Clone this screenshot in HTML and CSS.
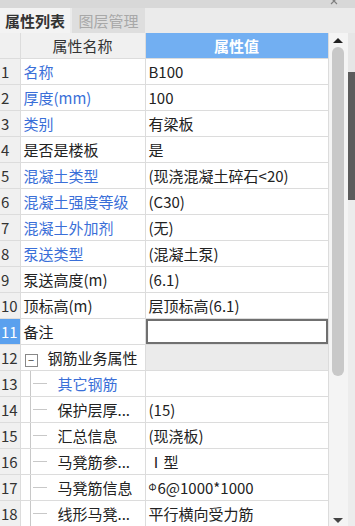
FILE: index.html
```html
<!DOCTYPE html>
<html lang="zh-CN">
<head>
<meta charset="UTF-8">
<title>属性列表</title>
<link rel="stylesheet" href="styles.css">
</head>
<body>
    <div class="topbar">
        <svg class="close" width="8" height="8" viewBox="0 0 8 8"><path d="M1 -2 L7 4 M7 -2 L1 4" stroke="#808080" stroke-width="1.2" fill="none"/></svg>
    </div>

    <!-- タブ -->
    <div class="tabs">
        <div class="tab active">属性列表</div>
        <div class="tab">图层管理</div>
    </div>

    <div class="main">
        <table class="grid">
            <colgroup><col class="c-num"><col class="c-name"><col class="c-val"></colgroup>
            <tr class="head"><th></th><th>属性名称</th><th class="val-head">属性值</th></tr>
            <tr><td class="num">1</td><td class="blue">名称</td><td>B100</td></tr>
            <tr><td class="num">2</td><td class="blue">厚度(mm)</td><td>100</td></tr>
            <tr><td class="num">3</td><td class="blue">类别</td><td>有梁板</td></tr>
            <tr><td class="num">4</td><td>是否是楼板</td><td>是</td></tr>
            <tr><td class="num">5</td><td class="blue">混凝土类型</td><td>(现浇混凝土碎石&lt;20)</td></tr>
            <tr><td class="num">6</td><td class="blue">混凝土强度等级</td><td>(C30)</td></tr>
            <tr><td class="num">7</td><td class="blue">混凝土外加剂</td><td>(无)</td></tr>
            <tr><td class="num">8</td><td class="blue">泵送类型</td><td>(混凝土泵)</td></tr>
            <tr><td class="num">9</td><td>泵送高度(m)</td><td>(6.1)</td></tr>
            <tr><td class="num">10</td><td>顶标高(m)</td><td>层顶标高(6.1)</td></tr>
            <tr><td class="num sel">11</td><td>备注</td><td class="editing"><div class="edit-box"></div></td></tr>
            <tr><td class="num">12</td><td class="group"><span class="toggle">−</span>钢筋业务属性</td><td class="group-val"></td></tr>
            <tr><td class="num">13</td><td class="leaf blue">其它钢筋</td><td></td></tr>
            <tr><td class="num">14</td><td class="leaf">保护层厚...</td><td>(15)</td></tr>
            <tr><td class="num">15</td><td class="leaf">汇总信息</td><td>(现浇板)</td></tr>
            <tr><td class="num">16</td><td class="leaf">马凳筋参...</td><td>Ⅰ型</td></tr>
            <tr><td class="num">17</td><td class="leaf">马凳筋信息</td><td><span class="rebar">Φ</span>6@1000*1000</td></tr>
            <tr><td class="num">18</td><td class="leaf">线形马凳...</td><td>平行横向受力筋</td></tr>
        </table>

        <!-- スクロールバー -->
        <div class="scroll">
            <div class="arrow up"></div>
            <div class="thumb"></div>
            <div class="arrow down"></div>
        </div>
        <div class="edge"></div>
    </div>
</body>
</html>
```

FILE: styles.css
```css
body {
    margin: 0;
    width: 355px;
    height: 526px;
    overflow: hidden;
    background: #ffffff;
    font-family: "Noto Sans CJK SC", "Liberation Sans", sans-serif;
    font-size: 15px;
    color: #222222;
}
.topbar {
    height: 8px;
    background: #d8d8d8;
    display: flex;
    justify-content: flex-end;
}
.close {
    display: block;
    margin-right: 17px;
}
.tabs {
    height: 25px;
    display: flex;
    background: #ebebeb;
}
.tab {
    width: 73px;
    display: flex;
    align-items: center;
    justify-content: center;
    background: #dedede;
    color: #a8a8a8;
    margin-right: 6px;
}
.tab.active {
    width: 70px;
    margin-right: 2px;
    background: #f3f3f3;
    color: #333333;
    font-weight: bold;
}
.main {
    display: flex;
}
.grid {
    border-collapse: collapse;
    table-layout: fixed;
    width: 328px;
}
.c-num { width: 20px; }
.c-name { width: 125px; }
.c-val { width: 183px; }
.grid th, .grid td {
    height: 25px;
    padding: 0 0 0 3px;
    border: 1px solid #dcdcdc;
    white-space: nowrap;
    overflow: hidden;
    text-align: left;
    font-weight: normal;
}
.grid tr:first-child th { border-top: none; }
.grid tr > :first-child { border-left: none; }
.head th {
    background: #f0f0f0;
    text-align: center;
    padding: 0;
    color: #333333;
}
.head th.val-head {
    background: #72aff2;
    color: #ffffff;
    font-weight: bold;
}
.grid td.num {
    background: #f0f0f0;
    padding: 0 0 0 1px;
    color: #333333;
}
.grid td.num.sel {
    background: #5aa0ee;
    color: #ffffff;
}
.blue { color: #3a6fd8; }
.editing { padding: 0 !important; }
.edit-box {
    height: 21px;
    border: 2px solid #707070;
}
.toggle {
    display: inline-flex;
    align-items: center;
    justify-content: center;
    width: 11px;
    height: 11px;
    border: 1px solid #888888;
    font-size: 11px;
    line-height: 1;
    color: #444444;
    margin: 0 10px 0 1px;
    vertical-align: -1px;
}
.group-val { background: #ebebeb; }
.grid td.leaf {
    padding-left: 37px;
    background-image:
        linear-gradient(#c8c8c8, #c8c8c8),
        linear-gradient(#c8c8c8, #c8c8c8);
    background-size: 1px 100%, 14px 1px;
    background-position: 9px 0, 12px 50%;
    background-repeat: no-repeat;
}
.rebar {
    font-size: 10px;
    vertical-align: 3px;
    margin-right: 1px;
}
.scroll {
    width: 20px;
    height: 493px;
    background: #f4f4f4;
    display: flex;
    flex-direction: column;
    align-items: center;
}
.arrow {
    width: 0;
    height: 0;
    border-left: 5px solid transparent;
    border-right: 5px solid transparent;
}
.arrow.up {
    border-bottom: 5px solid #222222;
    margin-top: 5px;
}
.arrow.down {
    border-top: 5px solid #444444;
    margin-top: auto;
    margin-bottom: 3px;
}
.thumb {
    width: 12px;
    height: 329px;
    margin-top: 4px;
    border-radius: 6px;
    background: #c8c8c8;
}
.edge {
    width: 7px;
    height: 493px;
    background: linear-gradient(#e6e6e6 0 39px, #5c5c5c 39px 167px, #ececec 167px);
}
```
